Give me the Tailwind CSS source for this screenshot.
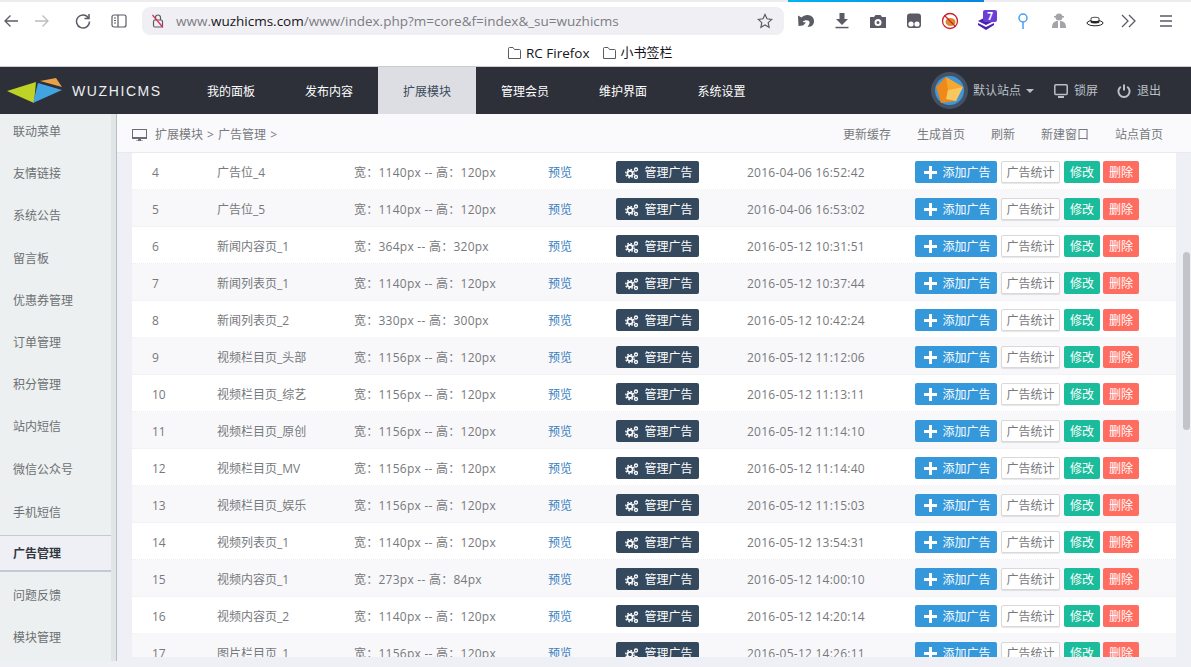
<!DOCTYPE html>
<html lang="zh-CN">

<head>
    <meta charset="UTF-8" />
    <title>WUZHICMS</title>
    <script src="https://cdn.jsdelivr.net/npm/@tailwindcss/browser@4"></script>
</head>

<body class="h-[667px] w-[1191px] overflow-hidden bg-[#eff0f6] text-[12px] text-[#77797d] font-['Open_Sans','Noto_Sans_CJK_SC',sans-serif]">

    <!-- browser toolbar -->
    <div class="h-[67px] bg-white border-b border-[#c9cbce]">
        <div class="h-[2px] bg-[#ededf0] pl-[788px]">
            <div class="h-[2px] w-[196px] bg-gradient-to-r from-[#00b3f4] to-[#0a84e0]"></div>
        </div>
        <div class="flex h-[38px] items-center text-[#5b5b66]">
            <svg class="ml-[3px] h-4 w-4" viewBox="0 0 16 16" fill="none" stroke="#5b5b66" stroke-width="1.3"><path d="M15 8H2M7.5 2.5 2 8l5.500 5.500" /></svg>
            <svg class="ml-[15px] h-4 w-4" viewBox="0 0 16 16" fill="none" stroke="#bcbcc2" stroke-width="1.3"><path d="M1 8h13M8.500 2.500 14 8l-5.500 5.500" /></svg>
            <svg class="ml-[25px] h-4 w-4" viewBox="0 0 16 16" fill="none" stroke="#5b5b66" stroke-width="1.500"><path d="M13.500 5A6.500 6.500 0 1 0 14.500 8.500" /><path d="M14 1v4.500H9.500" /></svg>
            <svg class="ml-[20px] h-4 w-4" viewBox="0 0 16 16" fill="none" stroke="#5b5b66" stroke-width="1.200"><rect x="1" y="2" width="14" height="12" rx="2" /><path d="M7 2v12M3 5h2M3 7.500h2M3 10h2" /></svg>
            <div class="ml-[15px] flex h-[28px] w-[642px] items-center rounded-[8px] bg-[#f0f0f4] pl-[8px] text-[13.500px]">
                <svg class="h-4 w-4 shrink-0" viewBox="0 0 16 16" fill="none" stroke="#5b5b66" stroke-width="1.200"><rect x="3.500" y="7" width="9" height="7" rx="1.500" /><path d="M5.500 7V4.500a2.500 2.500 0 0 1 5 0V7" /><path d="M2.500 2 13 14.500" stroke="#e22850" /></svg>
                <span class="ml-[10px] whitespace-nowrap text-[#7c7c84]">www.<span class="text-[#15141a]">wuzhicms.com</span>/www/index.php?m=core&amp;f=index&amp;_su=wuzhicms</span>
                <svg class="ml-auto mr-[11px] h-4 w-4 shrink-0" viewBox="0 0 16 16" fill="none" stroke="#5b5b66" stroke-width="1.200"><path d="m8 1.500 2 4.300 4.700.6-3.500 3.200.9 4.700L8 12l-4.100 2.300.9-4.700L1.300 6.400 6 5.800z" /></svg>
            </div>
            <div class="ml-[13px] flex items-center">
                <svg class="h-[18px] w-[18px]" viewBox="0 0 18 18" fill="#5b5b66"><path d="M1 3.500 1.500 14l4.500-.5 3-3-3.500-.5C7 8 10.500 7.500 12 9c1.200 1.300.5 3.500-1.500 5.500 3 1 6-1 6.500-4.500C17.500 6 14.500 3 10.500 3 8 3 6 4.200 4.500 5.500z" /></svg>
                <svg class="ml-[18px] h-[18px] w-[18px]" viewBox="0 0 18 18" fill="#5b5b66"><path d="M6.500 1h5v6h3.500L9 13 3 7h3.500z" /><rect x="2.500" y="14.800" width="13" height="1.500" /></svg>
                <svg class="ml-[18px] h-[18px] w-[18px]" viewBox="0 0 18 18" fill="#5b5b66"><path fill-rule="evenodd" d="M1 5h4l1.500-2h5L13 5h4v11H1zm8 2a3.500 3.500 0 1 0 0 7 3.500 3.500 0 0 0 0-7zm0 2a1.500 1.500 0 1 1 0 3 1.500 1.500 0 0 1 0-3z" /></svg>
                <svg class="ml-[18px] h-[18px] w-[18px]" viewBox="0 0 18 18"><rect x="2" y="1.500" width="14" height="14.500" rx="3" fill="#5b5b66" /><circle cx="6" cy="12" r="2.600" fill="#fff" /><circle cx="12" cy="12" r="2.600" fill="#fff" /></svg>
                <svg class="ml-[18px] h-[18px] w-[18px]" viewBox="0 0 18 18"><circle cx="9" cy="9" r="7.500" fill="#fff" stroke="#d0202c" stroke-width="1.300" /><ellipse cx="9.500" cy="10" rx="5" ry="4" fill="#d98a2b" /><path d="M3.500 3.500 14.500 14.500" stroke="#d0202c" stroke-width="1.300" /></svg>
                <div class="relative ml-[18px] h-[22px] w-[20px]">
                    <svg class="absolute left-0 top-[4px] h-[18px] w-[18px]" viewBox="0 0 18 18" fill="#4a1fb0"><path d="M9 3 17 7l-8 4-8-4z" /><path d="M1 9l8 4 8-4v2l-8 5-8-5z" /></svg>
                    <span class="absolute left-[6px] top-0 h-[12px] w-[14px] rounded-[2px] bg-[#6a3fd8] text-center text-[10px] font-bold leading-[12px] text-white">7</span>
                </div>
                <svg class="ml-[17px] h-[18px] w-[18px]" viewBox="0 0 18 18" fill="none" stroke="#4a9df0" stroke-width="1.500"><circle cx="9" cy="6" r="4" /><path d="M9 10v7" /></svg>
                <svg class="ml-[18px] h-[18px] w-[18px]" viewBox="0 0 18 18" fill="#a4a4a8"><circle cx="9" cy="5" r="3.500" /><path d="M2 16c0-5 2-7 6-7v7zM16 16c0-5-2-7-6-7v7z" /><rect x="4" y="4" width="10" height="1.500" /></svg>
                <svg class="ml-[18px] h-[18px] w-[18px]" viewBox="0 0 18 18"><ellipse cx="9" cy="11" rx="8" ry="2.800" fill="#fff" stroke="#222" stroke-width="1" /><path d="M5 10.500V6c2-1 6-1 8 0v4.500c-3 .8-5 .8-8 0z" fill="#fff" stroke="#222" stroke-width="0.800" /><path d="M5 8.500c3 .8 5 .8 8 0v2c-3 .8-5 .8-8 0z" fill="#222" /></svg>
                <svg class="ml-[16px] h-[18px] w-[18px]" viewBox="0 0 18 18" fill="none" stroke="#5b5b66" stroke-width="1.300"><path d="m2 3 6 6-6 6M9 3l6 6-6 6" /></svg>
                <svg class="ml-[20px] h-[16px] w-[16px]" viewBox="0 0 16 16" fill="none" stroke="#5b5b66" stroke-width="1.300"><path d="M2 3h12M2 8h12M2 13h12" /></svg>
            </div>
        </div>
        <div class="flex h-[26px] items-center pl-[507px] text-[13px] text-[#15141a]">
            <svg class="h-[14px] w-[15px]" viewBox="0 0 15 14" fill="none" stroke="#5b5b66" stroke-width="1"><path d="M1.500 12.500v-10a1 1 0 0 1 1-1H6l1.500 2h5a1 1 0 0 1 1 1v8z" /></svg>
            <span class="ml-[4px] text-[13.500px]">RC Firefox</span>
            <svg class="ml-[12px] h-[14px] w-[15px]" viewBox="0 0 15 14" fill="none" stroke="#5b5b66" stroke-width="1"><path d="M1.500 12.500v-10a1 1 0 0 1 1-1H6l1.500 2h5a1 1 0 0 1 1 1v8z" /></svg>
            <span class="ml-[4px]">小书签栏</span>
        </div>
    </div>

    <!-- top nav -->
    <header class="flex h-[47px] items-stretch bg-[#2d3038] pt-0 text-white">
        <div class="flex w-[182px] items-center pl-[7px]">
            <svg class="h-[26px] w-[58px]" viewBox="0 0 58 26">
                <polygon points="0,13 29,4 27,25" fill="#bfd324" />
                <polygon points="31,5 55,12 26,25" fill="#41a3e0" />
                <polygon points="33,3 49,0 55,9" fill="#e9a048" />
            </svg>
            <span class="ml-[7px] pt-[2px] font-['Liberation_Sans',sans-serif] text-[14px] tracking-[1.600px] text-[#eceef0]">WUZHICMS</span>
        </div>
        <a class="flex w-[98px] items-center justify-center pt-[2px]">我的面板</a>
        <a class="flex w-[98px] items-center justify-center pt-[2px]">发布内容</a>
        <a class="flex w-[98px] items-center justify-center bg-[#dcdee3] pt-[2px] text-[#3a4a5a]">扩展模块</a>
        <a class="flex w-[98px] items-center justify-center pt-[2px]">管理会员</a>
        <a class="flex w-[98px] items-center justify-center pt-[2px]">维护界面</a>
        <a class="flex w-[99px] items-center justify-center pt-[2px]">系统设置</a>
        <div class="ml-auto flex items-center pr-[30px] text-[#b9c0c8]">
            <svg class="h-[37px] w-[37px]" viewBox="0 0 37 37">
                <circle cx="18.500" cy="18.500" r="18.500" fill="#445266" />
                <circle cx="18.500" cy="18.500" r="14.500" fill="#3f97dc" />
                <polygon points="15,5 32,15 25,29 10,31 5,15" fill="#ee8a1c" />
                <polygon points="15,5 32,15 17,18" fill="#f6a72e" />
                <polygon points="17,18 32,15 25,29 15,27" fill="#f8c860" />
            </svg>
            <span class="ml-[5px] pt-[1px]">默认站点</span>
            <span class="ml-[5px] h-0 w-0 border-x-[4px] border-t-[4px] border-x-transparent border-t-[#b9c0c8]"></span>
            <svg class="ml-[20px] h-[14px] w-[14px]" viewBox="0 0 14 14" fill="none" stroke="#b9c0c8" stroke-width="1.500"><rect x="0.800" y="0.800" width="12.400" height="9.600" rx="1" /><path d="M4 13h6" stroke-width="2" /></svg>
            <span class="ml-[6px] pt-[1px]">锁屏</span>
            <svg class="ml-[19px] h-[14px] w-[14px]" viewBox="0 0 14 14" fill="none" stroke="#b9c0c8" stroke-width="2"><path d="M7 0.500v6" /><path d="M3.800 2.800a5.600 5.600 0 1 0 6.400 0" /></svg>
            <span class="ml-[6px] pt-[1px]">退出</span>
        </div>
    </header>

    <div class="flex h-[547px]">
        <!-- sidebar -->
        <aside class="flex w-[117px] shrink-0 border-r border-[#b8bdc7] bg-[#e0e5e5]">
            <nav class="flex w-[111px] flex-col overflow-hidden bg-[#ecf0f1] pt-[1px] text-[#6d7073]">
                <a class="flex h-[34px] shrink-0 items-center pl-[13px]">联动菜单</a>
                <a class="mt-[8px] flex h-[34px] shrink-0 items-center pl-[13px]">友情链接</a>
                <a class="mt-[8px] flex h-[34px] shrink-0 items-center pl-[13px]">系统公告</a>
                <a class="mt-[9px] flex h-[34px] shrink-0 items-center pl-[13px]">留言板</a>
                <a class="mt-[8px] flex h-[34px] shrink-0 items-center pl-[13px]">优惠券管理</a>
                <a class="mt-[8px] flex h-[34px] shrink-0 items-center pl-[13px]">订单管理</a>
                <a class="mt-[8px] flex h-[34px] shrink-0 items-center pl-[13px]">积分管理</a>
                <a class="mt-[8px] flex h-[34px] shrink-0 items-center pl-[13px]">站内短信</a>
                <a class="mt-[9px] flex h-[34px] shrink-0 items-center pl-[13px]">微信公众号</a>
                <a class="mt-[9px] flex h-[34px] shrink-0 items-center pl-[13px]">手机短信</a>
                <a class="mt-[5px] flex h-[37px] shrink-0 items-center border-y border-b-[2px] border-[#c4c9d3] bg-[#eff0f6] pl-[13px] pt-[1px] font-bold text-[#34383d]">广告管理</a>
                <a class="mt-[7px] flex h-[34px] shrink-0 items-center pl-[13px]">问题反馈</a>
                <a class="mt-[8px] flex h-[34px] shrink-0 items-center pl-[13px]">模块管理</a>
            </nav>
        </aside>

        <main class="relative flex min-w-0 flex-1 flex-col">
            <!-- breadcrumb -->
            <div class="flex h-[39px] shrink-0 items-center border-b border-[#e9eaf0] bg-[#fafafc] pl-[15px] pr-[28px] pt-[3px]">
                <svg class="h-[14px] w-[15px]" viewBox="0 0 15 14" fill="#6b6d70"><path fill-rule="evenodd" d="M0 1h15v10H9v1.500h2V13H4v-.5h2V11H0zm1 1v7h13V2z" /></svg>
                <span class="ml-[8px] [word-spacing:1px]">扩展模块 &gt; 广告管理 &gt;</span>
                <div class="ml-auto flex gap-[26px]">
                    <a>更新缓存</a><a>生成首页</a><a>刷新</a><a>新建窗口</a><a>站点首页</a>
                </div>
            </div>

            <!-- table -->
            <div class="ml-[15px] mr-[15px] flex h-[504px] flex-col overflow-hidden bg-white">
                <div class="grid h-[37px] shrink-0 grid-cols-[85px_137px_194px_68px_131px_168px_1fr] items-center border-b border-dotted border-[#eeeef2] bg-white pt-[2px] [&>span]:pt-[2px]">
                    <span class="pl-[20px]">4</span><span>广告位_4</span><span class="tracking-[0.250px]">宽：1140px -- 高：120px</span><a class="pt-[2px] text-[#3a7fc0]">预览</a>
                    <a class="flex h-[22px] w-[83px] items-center justify-center gap-[5px] rounded-[2px] bg-[#34495e] pl-[3px] pt-[1px] text-white"><svg class="h-[14px] w-[14px]" viewBox="0 0 14 14" fill="none" stroke="#fff"><circle cx="5" cy="7.500" r="2.600" stroke-width="1.600" /><circle cx="5" cy="7.500" r="4.200" stroke-width="1.400" stroke-dasharray="1.600 1.700" /><circle cx="11" cy="3.500" r="1.500" stroke-width="1.300" /><circle cx="11" cy="11" r="1.500" stroke-width="1.300" /></svg>管理广告</a>
                    <span class="tracking-[0.250px]">2016-04-06 16:52:42</span>
                    <div class="flex gap-[4px]">
                        <a class="flex h-[22px] w-[82px] items-center justify-center gap-[5px] rounded-[2px] bg-[#3498db] pl-[3px] pt-[1px] text-white"><svg class="h-[13px] w-[13px]" viewBox="0 0 13 13" fill="#fff"><path d="M5 0h3v5h5v3H8v5H5V8H0V5h5z" /></svg>添加广告</a>
                        <a class="flex h-[22px] w-[59px] items-center justify-center rounded-[2px] border border-[#d9d9d9] bg-white pt-[1px] text-[#77797d] shadow-[0_1px_1px_rgba(0,0,0,0.1)]">广告统计</a>
                        <a class="flex h-[22px] w-[36px] items-center justify-center rounded-[2px] bg-[#1abc9c] pt-[1px] text-white">修改</a>
                        <a class="-ml-[1px] flex h-[22px] w-[36px] items-center justify-center rounded-[2px] bg-[#ff6c60] pt-[1px] text-white">删除</a>
                    </div>
                </div>
                <div class="grid h-[37px] shrink-0 grid-cols-[85px_137px_194px_68px_131px_168px_1fr] items-center border-b border-dotted border-[#eeeef2] bg-[#f8f8fa] pt-[2px] [&>span]:pt-[2px]">
                    <span class="pl-[20px]">5</span><span>广告位_5</span><span class="tracking-[0.250px]">宽：1140px -- 高：120px</span><a class="pt-[2px] text-[#3a7fc0]">预览</a>
                    <a class="flex h-[22px] w-[83px] items-center justify-center gap-[5px] rounded-[2px] bg-[#34495e] pl-[3px] pt-[1px] text-white"><svg class="h-[14px] w-[14px]" viewBox="0 0 14 14" fill="none" stroke="#fff"><circle cx="5" cy="7.500" r="2.600" stroke-width="1.600" /><circle cx="5" cy="7.500" r="4.200" stroke-width="1.400" stroke-dasharray="1.600 1.700" /><circle cx="11" cy="3.500" r="1.500" stroke-width="1.300" /><circle cx="11" cy="11" r="1.500" stroke-width="1.300" /></svg>管理广告</a>
                    <span class="tracking-[0.250px]">2016-04-06 16:53:02</span>
                    <div class="flex gap-[4px]">
                        <a class="flex h-[22px] w-[82px] items-center justify-center gap-[5px] rounded-[2px] bg-[#3498db] pl-[3px] pt-[1px] text-white"><svg class="h-[13px] w-[13px]" viewBox="0 0 13 13" fill="#fff"><path d="M5 0h3v5h5v3H8v5H5V8H0V5h5z" /></svg>添加广告</a>
                        <a class="flex h-[22px] w-[59px] items-center justify-center rounded-[2px] border border-[#d9d9d9] bg-white pt-[1px] text-[#77797d] shadow-[0_1px_1px_rgba(0,0,0,0.1)]">广告统计</a>
                        <a class="flex h-[22px] w-[36px] items-center justify-center rounded-[2px] bg-[#1abc9c] pt-[1px] text-white">修改</a>
                        <a class="-ml-[1px] flex h-[22px] w-[36px] items-center justify-center rounded-[2px] bg-[#ff6c60] pt-[1px] text-white">删除</a>
                    </div>
                </div>
                <div class="grid h-[37px] shrink-0 grid-cols-[85px_137px_194px_68px_131px_168px_1fr] items-center border-b border-dotted border-[#eeeef2] bg-white pt-[2px] [&>span]:pt-[2px]">
                    <span class="pl-[20px]">6</span><span>新闻内容页_1</span><span class="tracking-[0.250px]">宽：364px -- 高：320px</span><a class="pt-[2px] text-[#3a7fc0]">预览</a>
                    <a class="flex h-[22px] w-[83px] items-center justify-center gap-[5px] rounded-[2px] bg-[#34495e] pl-[3px] pt-[1px] text-white"><svg class="h-[14px] w-[14px]" viewBox="0 0 14 14" fill="none" stroke="#fff"><circle cx="5" cy="7.500" r="2.600" stroke-width="1.600" /><circle cx="5" cy="7.500" r="4.200" stroke-width="1.400" stroke-dasharray="1.600 1.700" /><circle cx="11" cy="3.500" r="1.500" stroke-width="1.300" /><circle cx="11" cy="11" r="1.500" stroke-width="1.300" /></svg>管理广告</a>
                    <span class="tracking-[0.250px]">2016-05-12 10:31:51</span>
                    <div class="flex gap-[4px]">
                        <a class="flex h-[22px] w-[82px] items-center justify-center gap-[5px] rounded-[2px] bg-[#3498db] pl-[3px] pt-[1px] text-white"><svg class="h-[13px] w-[13px]" viewBox="0 0 13 13" fill="#fff"><path d="M5 0h3v5h5v3H8v5H5V8H0V5h5z" /></svg>添加广告</a>
                        <a class="flex h-[22px] w-[59px] items-center justify-center rounded-[2px] border border-[#d9d9d9] bg-white pt-[1px] text-[#77797d] shadow-[0_1px_1px_rgba(0,0,0,0.1)]">广告统计</a>
                        <a class="flex h-[22px] w-[36px] items-center justify-center rounded-[2px] bg-[#1abc9c] pt-[1px] text-white">修改</a>
                        <a class="-ml-[1px] flex h-[22px] w-[36px] items-center justify-center rounded-[2px] bg-[#ff6c60] pt-[1px] text-white">删除</a>
                    </div>
                </div>
                <div class="grid h-[37px] shrink-0 grid-cols-[85px_137px_194px_68px_131px_168px_1fr] items-center border-b border-dotted border-[#eeeef2] bg-[#f8f8fa] pt-[2px] [&>span]:pt-[2px]">
                    <span class="pl-[20px]">7</span><span>新闻列表页_1</span><span class="tracking-[0.250px]">宽：1140px -- 高：120px</span><a class="pt-[2px] text-[#3a7fc0]">预览</a>
                    <a class="flex h-[22px] w-[83px] items-center justify-center gap-[5px] rounded-[2px] bg-[#34495e] pl-[3px] pt-[1px] text-white"><svg class="h-[14px] w-[14px]" viewBox="0 0 14 14" fill="none" stroke="#fff"><circle cx="5" cy="7.500" r="2.600" stroke-width="1.600" /><circle cx="5" cy="7.500" r="4.200" stroke-width="1.400" stroke-dasharray="1.600 1.700" /><circle cx="11" cy="3.500" r="1.500" stroke-width="1.300" /><circle cx="11" cy="11" r="1.500" stroke-width="1.300" /></svg>管理广告</a>
                    <span class="tracking-[0.250px]">2016-05-12 10:37:44</span>
                    <div class="flex gap-[4px]">
                        <a class="flex h-[22px] w-[82px] items-center justify-center gap-[5px] rounded-[2px] bg-[#3498db] pl-[3px] pt-[1px] text-white"><svg class="h-[13px] w-[13px]" viewBox="0 0 13 13" fill="#fff"><path d="M5 0h3v5h5v3H8v5H5V8H0V5h5z" /></svg>添加广告</a>
                        <a class="flex h-[22px] w-[59px] items-center justify-center rounded-[2px] border border-[#d9d9d9] bg-white pt-[1px] text-[#77797d] shadow-[0_1px_1px_rgba(0,0,0,0.1)]">广告统计</a>
                        <a class="flex h-[22px] w-[36px] items-center justify-center rounded-[2px] bg-[#1abc9c] pt-[1px] text-white">修改</a>
                        <a class="-ml-[1px] flex h-[22px] w-[36px] items-center justify-center rounded-[2px] bg-[#ff6c60] pt-[1px] text-white">删除</a>
                    </div>
                </div>
                <div class="grid h-[37px] shrink-0 grid-cols-[85px_137px_194px_68px_131px_168px_1fr] items-center border-b border-dotted border-[#eeeef2] bg-white pt-[2px] [&>span]:pt-[2px]">
                    <span class="pl-[20px]">8</span><span>新闻列表页_2</span><span class="tracking-[0.250px]">宽：330px -- 高：300px</span><a class="pt-[2px] text-[#3a7fc0]">预览</a>
                    <a class="flex h-[22px] w-[83px] items-center justify-center gap-[5px] rounded-[2px] bg-[#34495e] pl-[3px] pt-[1px] text-white"><svg class="h-[14px] w-[14px]" viewBox="0 0 14 14" fill="none" stroke="#fff"><circle cx="5" cy="7.500" r="2.600" stroke-width="1.600" /><circle cx="5" cy="7.500" r="4.200" stroke-width="1.400" stroke-dasharray="1.600 1.700" /><circle cx="11" cy="3.500" r="1.500" stroke-width="1.300" /><circle cx="11" cy="11" r="1.500" stroke-width="1.300" /></svg>管理广告</a>
                    <span class="tracking-[0.250px]">2016-05-12 10:42:24</span>
                    <div class="flex gap-[4px]">
                        <a class="flex h-[22px] w-[82px] items-center justify-center gap-[5px] rounded-[2px] bg-[#3498db] pl-[3px] pt-[1px] text-white"><svg class="h-[13px] w-[13px]" viewBox="0 0 13 13" fill="#fff"><path d="M5 0h3v5h5v3H8v5H5V8H0V5h5z" /></svg>添加广告</a>
                        <a class="flex h-[22px] w-[59px] items-center justify-center rounded-[2px] border border-[#d9d9d9] bg-white pt-[1px] text-[#77797d] shadow-[0_1px_1px_rgba(0,0,0,0.1)]">广告统计</a>
                        <a class="flex h-[22px] w-[36px] items-center justify-center rounded-[2px] bg-[#1abc9c] pt-[1px] text-white">修改</a>
                        <a class="-ml-[1px] flex h-[22px] w-[36px] items-center justify-center rounded-[2px] bg-[#ff6c60] pt-[1px] text-white">删除</a>
                    </div>
                </div>
                <div class="grid h-[37px] shrink-0 grid-cols-[85px_137px_194px_68px_131px_168px_1fr] items-center border-b border-dotted border-[#eeeef2] bg-[#f8f8fa] pt-[2px] [&>span]:pt-[2px]">
                    <span class="pl-[20px]">9</span><span>视频栏目页_头部</span><span class="tracking-[0.250px]">宽：1156px -- 高：120px</span><a class="pt-[2px] text-[#3a7fc0]">预览</a>
                    <a class="flex h-[22px] w-[83px] items-center justify-center gap-[5px] rounded-[2px] bg-[#34495e] pl-[3px] pt-[1px] text-white"><svg class="h-[14px] w-[14px]" viewBox="0 0 14 14" fill="none" stroke="#fff"><circle cx="5" cy="7.500" r="2.600" stroke-width="1.600" /><circle cx="5" cy="7.500" r="4.200" stroke-width="1.400" stroke-dasharray="1.600 1.700" /><circle cx="11" cy="3.500" r="1.500" stroke-width="1.300" /><circle cx="11" cy="11" r="1.500" stroke-width="1.300" /></svg>管理广告</a>
                    <span class="tracking-[0.250px]">2016-05-12 11:12:06</span>
                    <div class="flex gap-[4px]">
                        <a class="flex h-[22px] w-[82px] items-center justify-center gap-[5px] rounded-[2px] bg-[#3498db] pl-[3px] pt-[1px] text-white"><svg class="h-[13px] w-[13px]" viewBox="0 0 13 13" fill="#fff"><path d="M5 0h3v5h5v3H8v5H5V8H0V5h5z" /></svg>添加广告</a>
                        <a class="flex h-[22px] w-[59px] items-center justify-center rounded-[2px] border border-[#d9d9d9] bg-white pt-[1px] text-[#77797d] shadow-[0_1px_1px_rgba(0,0,0,0.1)]">广告统计</a>
                        <a class="flex h-[22px] w-[36px] items-center justify-center rounded-[2px] bg-[#1abc9c] pt-[1px] text-white">修改</a>
                        <a class="-ml-[1px] flex h-[22px] w-[36px] items-center justify-center rounded-[2px] bg-[#ff6c60] pt-[1px] text-white">删除</a>
                    </div>
                </div>
                <div class="grid h-[37px] shrink-0 grid-cols-[85px_137px_194px_68px_131px_168px_1fr] items-center border-b border-dotted border-[#eeeef2] bg-white pt-[2px] [&>span]:pt-[2px]">
                    <span class="pl-[20px]">10</span><span>视频栏目页_综艺</span><span class="tracking-[0.250px]">宽：1156px -- 高：120px</span><a class="pt-[2px] text-[#3a7fc0]">预览</a>
                    <a class="flex h-[22px] w-[83px] items-center justify-center gap-[5px] rounded-[2px] bg-[#34495e] pl-[3px] pt-[1px] text-white"><svg class="h-[14px] w-[14px]" viewBox="0 0 14 14" fill="none" stroke="#fff"><circle cx="5" cy="7.500" r="2.600" stroke-width="1.600" /><circle cx="5" cy="7.500" r="4.200" stroke-width="1.400" stroke-dasharray="1.600 1.700" /><circle cx="11" cy="3.500" r="1.500" stroke-width="1.300" /><circle cx="11" cy="11" r="1.500" stroke-width="1.300" /></svg>管理广告</a>
                    <span class="tracking-[0.250px]">2016-05-12 11:13:11</span>
                    <div class="flex gap-[4px]">
                        <a class="flex h-[22px] w-[82px] items-center justify-center gap-[5px] rounded-[2px] bg-[#3498db] pl-[3px] pt-[1px] text-white"><svg class="h-[13px] w-[13px]" viewBox="0 0 13 13" fill="#fff"><path d="M5 0h3v5h5v3H8v5H5V8H0V5h5z" /></svg>添加广告</a>
                        <a class="flex h-[22px] w-[59px] items-center justify-center rounded-[2px] border border-[#d9d9d9] bg-white pt-[1px] text-[#77797d] shadow-[0_1px_1px_rgba(0,0,0,0.1)]">广告统计</a>
                        <a class="flex h-[22px] w-[36px] items-center justify-center rounded-[2px] bg-[#1abc9c] pt-[1px] text-white">修改</a>
                        <a class="-ml-[1px] flex h-[22px] w-[36px] items-center justify-center rounded-[2px] bg-[#ff6c60] pt-[1px] text-white">删除</a>
                    </div>
                </div>
                <div class="grid h-[37px] shrink-0 grid-cols-[85px_137px_194px_68px_131px_168px_1fr] items-center border-b border-dotted border-[#eeeef2] bg-[#f8f8fa] pt-[2px] [&>span]:pt-[2px]">
                    <span class="pl-[20px]">11</span><span>视频栏目页_原创</span><span class="tracking-[0.250px]">宽：1156px -- 高：120px</span><a class="pt-[2px] text-[#3a7fc0]">预览</a>
                    <a class="flex h-[22px] w-[83px] items-center justify-center gap-[5px] rounded-[2px] bg-[#34495e] pl-[3px] pt-[1px] text-white"><svg class="h-[14px] w-[14px]" viewBox="0 0 14 14" fill="none" stroke="#fff"><circle cx="5" cy="7.500" r="2.600" stroke-width="1.600" /><circle cx="5" cy="7.500" r="4.200" stroke-width="1.400" stroke-dasharray="1.600 1.700" /><circle cx="11" cy="3.500" r="1.500" stroke-width="1.300" /><circle cx="11" cy="11" r="1.500" stroke-width="1.300" /></svg>管理广告</a>
                    <span class="tracking-[0.250px]">2016-05-12 11:14:10</span>
                    <div class="flex gap-[4px]">
                        <a class="flex h-[22px] w-[82px] items-center justify-center gap-[5px] rounded-[2px] bg-[#3498db] pl-[3px] pt-[1px] text-white"><svg class="h-[13px] w-[13px]" viewBox="0 0 13 13" fill="#fff"><path d="M5 0h3v5h5v3H8v5H5V8H0V5h5z" /></svg>添加广告</a>
                        <a class="flex h-[22px] w-[59px] items-center justify-center rounded-[2px] border border-[#d9d9d9] bg-white pt-[1px] text-[#77797d] shadow-[0_1px_1px_rgba(0,0,0,0.1)]">广告统计</a>
                        <a class="flex h-[22px] w-[36px] items-center justify-center rounded-[2px] bg-[#1abc9c] pt-[1px] text-white">修改</a>
                        <a class="-ml-[1px] flex h-[22px] w-[36px] items-center justify-center rounded-[2px] bg-[#ff6c60] pt-[1px] text-white">删除</a>
                    </div>
                </div>
                <div class="grid h-[37px] shrink-0 grid-cols-[85px_137px_194px_68px_131px_168px_1fr] items-center border-b border-dotted border-[#eeeef2] bg-white pt-[2px] [&>span]:pt-[2px]">
                    <span class="pl-[20px]">12</span><span>视频栏目页_MV</span><span class="tracking-[0.250px]">宽：1156px -- 高：120px</span><a class="pt-[2px] text-[#3a7fc0]">预览</a>
                    <a class="flex h-[22px] w-[83px] items-center justify-center gap-[5px] rounded-[2px] bg-[#34495e] pl-[3px] pt-[1px] text-white"><svg class="h-[14px] w-[14px]" viewBox="0 0 14 14" fill="none" stroke="#fff"><circle cx="5" cy="7.500" r="2.600" stroke-width="1.600" /><circle cx="5" cy="7.500" r="4.200" stroke-width="1.400" stroke-dasharray="1.600 1.700" /><circle cx="11" cy="3.500" r="1.500" stroke-width="1.300" /><circle cx="11" cy="11" r="1.500" stroke-width="1.300" /></svg>管理广告</a>
                    <span class="tracking-[0.250px]">2016-05-12 11:14:40</span>
                    <div class="flex gap-[4px]">
                        <a class="flex h-[22px] w-[82px] items-center justify-center gap-[5px] rounded-[2px] bg-[#3498db] pl-[3px] pt-[1px] text-white"><svg class="h-[13px] w-[13px]" viewBox="0 0 13 13" fill="#fff"><path d="M5 0h3v5h5v3H8v5H5V8H0V5h5z" /></svg>添加广告</a>
                        <a class="flex h-[22px] w-[59px] items-center justify-center rounded-[2px] border border-[#d9d9d9] bg-white pt-[1px] text-[#77797d] shadow-[0_1px_1px_rgba(0,0,0,0.1)]">广告统计</a>
                        <a class="flex h-[22px] w-[36px] items-center justify-center rounded-[2px] bg-[#1abc9c] pt-[1px] text-white">修改</a>
                        <a class="-ml-[1px] flex h-[22px] w-[36px] items-center justify-center rounded-[2px] bg-[#ff6c60] pt-[1px] text-white">删除</a>
                    </div>
                </div>
                <div class="grid h-[37px] shrink-0 grid-cols-[85px_137px_194px_68px_131px_168px_1fr] items-center border-b border-dotted border-[#eeeef2] bg-[#f8f8fa] pt-[2px] [&>span]:pt-[2px]">
                    <span class="pl-[20px]">13</span><span>视频栏目页_娱乐</span><span class="tracking-[0.250px]">宽：1156px -- 高：120px</span><a class="pt-[2px] text-[#3a7fc0]">预览</a>
                    <a class="flex h-[22px] w-[83px] items-center justify-center gap-[5px] rounded-[2px] bg-[#34495e] pl-[3px] pt-[1px] text-white"><svg class="h-[14px] w-[14px]" viewBox="0 0 14 14" fill="none" stroke="#fff"><circle cx="5" cy="7.500" r="2.600" stroke-width="1.600" /><circle cx="5" cy="7.500" r="4.200" stroke-width="1.400" stroke-dasharray="1.600 1.700" /><circle cx="11" cy="3.500" r="1.500" stroke-width="1.300" /><circle cx="11" cy="11" r="1.500" stroke-width="1.300" /></svg>管理广告</a>
                    <span class="tracking-[0.250px]">2016-05-12 11:15:03</span>
                    <div class="flex gap-[4px]">
                        <a class="flex h-[22px] w-[82px] items-center justify-center gap-[5px] rounded-[2px] bg-[#3498db] pl-[3px] pt-[1px] text-white"><svg class="h-[13px] w-[13px]" viewBox="0 0 13 13" fill="#fff"><path d="M5 0h3v5h5v3H8v5H5V8H0V5h5z" /></svg>添加广告</a>
                        <a class="flex h-[22px] w-[59px] items-center justify-center rounded-[2px] border border-[#d9d9d9] bg-white pt-[1px] text-[#77797d] shadow-[0_1px_1px_rgba(0,0,0,0.1)]">广告统计</a>
                        <a class="flex h-[22px] w-[36px] items-center justify-center rounded-[2px] bg-[#1abc9c] pt-[1px] text-white">修改</a>
                        <a class="-ml-[1px] flex h-[22px] w-[36px] items-center justify-center rounded-[2px] bg-[#ff6c60] pt-[1px] text-white">删除</a>
                    </div>
                </div>
                <div class="grid h-[37px] shrink-0 grid-cols-[85px_137px_194px_68px_131px_168px_1fr] items-center border-b border-dotted border-[#eeeef2] bg-white pt-[2px] [&>span]:pt-[2px]">
                    <span class="pl-[20px]">14</span><span>视频列表页_1</span><span class="tracking-[0.250px]">宽：1140px -- 高：120px</span><a class="pt-[2px] text-[#3a7fc0]">预览</a>
                    <a class="flex h-[22px] w-[83px] items-center justify-center gap-[5px] rounded-[2px] bg-[#34495e] pl-[3px] pt-[1px] text-white"><svg class="h-[14px] w-[14px]" viewBox="0 0 14 14" fill="none" stroke="#fff"><circle cx="5" cy="7.500" r="2.600" stroke-width="1.600" /><circle cx="5" cy="7.500" r="4.200" stroke-width="1.400" stroke-dasharray="1.600 1.700" /><circle cx="11" cy="3.500" r="1.500" stroke-width="1.300" /><circle cx="11" cy="11" r="1.500" stroke-width="1.300" /></svg>管理广告</a>
                    <span class="tracking-[0.250px]">2016-05-12 13:54:31</span>
                    <div class="flex gap-[4px]">
                        <a class="flex h-[22px] w-[82px] items-center justify-center gap-[5px] rounded-[2px] bg-[#3498db] pl-[3px] pt-[1px] text-white"><svg class="h-[13px] w-[13px]" viewBox="0 0 13 13" fill="#fff"><path d="M5 0h3v5h5v3H8v5H5V8H0V5h5z" /></svg>添加广告</a>
                        <a class="flex h-[22px] w-[59px] items-center justify-center rounded-[2px] border border-[#d9d9d9] bg-white pt-[1px] text-[#77797d] shadow-[0_1px_1px_rgba(0,0,0,0.1)]">广告统计</a>
                        <a class="flex h-[22px] w-[36px] items-center justify-center rounded-[2px] bg-[#1abc9c] pt-[1px] text-white">修改</a>
                        <a class="-ml-[1px] flex h-[22px] w-[36px] items-center justify-center rounded-[2px] bg-[#ff6c60] pt-[1px] text-white">删除</a>
                    </div>
                </div>
                <div class="grid h-[37px] shrink-0 grid-cols-[85px_137px_194px_68px_131px_168px_1fr] items-center border-b border-dotted border-[#eeeef2] bg-[#f8f8fa] pt-[2px] [&>span]:pt-[2px]">
                    <span class="pl-[20px]">15</span><span>视频内容页_1</span><span class="tracking-[0.250px]">宽：273px -- 高：84px</span><a class="pt-[2px] text-[#3a7fc0]">预览</a>
                    <a class="flex h-[22px] w-[83px] items-center justify-center gap-[5px] rounded-[2px] bg-[#34495e] pl-[3px] pt-[1px] text-white"><svg class="h-[14px] w-[14px]" viewBox="0 0 14 14" fill="none" stroke="#fff"><circle cx="5" cy="7.500" r="2.600" stroke-width="1.600" /><circle cx="5" cy="7.500" r="4.200" stroke-width="1.400" stroke-dasharray="1.600 1.700" /><circle cx="11" cy="3.500" r="1.500" stroke-width="1.300" /><circle cx="11" cy="11" r="1.500" stroke-width="1.300" /></svg>管理广告</a>
                    <span class="tracking-[0.250px]">2016-05-12 14:00:10</span>
                    <div class="flex gap-[4px]">
                        <a class="flex h-[22px] w-[82px] items-center justify-center gap-[5px] rounded-[2px] bg-[#3498db] pl-[3px] pt-[1px] text-white"><svg class="h-[13px] w-[13px]" viewBox="0 0 13 13" fill="#fff"><path d="M5 0h3v5h5v3H8v5H5V8H0V5h5z" /></svg>添加广告</a>
                        <a class="flex h-[22px] w-[59px] items-center justify-center rounded-[2px] border border-[#d9d9d9] bg-white pt-[1px] text-[#77797d] shadow-[0_1px_1px_rgba(0,0,0,0.1)]">广告统计</a>
                        <a class="flex h-[22px] w-[36px] items-center justify-center rounded-[2px] bg-[#1abc9c] pt-[1px] text-white">修改</a>
                        <a class="-ml-[1px] flex h-[22px] w-[36px] items-center justify-center rounded-[2px] bg-[#ff6c60] pt-[1px] text-white">删除</a>
                    </div>
                </div>
                <div class="grid h-[37px] shrink-0 grid-cols-[85px_137px_194px_68px_131px_168px_1fr] items-center border-b border-dotted border-[#eeeef2] bg-white pt-[2px] [&>span]:pt-[2px]">
                    <span class="pl-[20px]">16</span><span>视频内容页_2</span><span class="tracking-[0.250px]">宽：1140px -- 高：120px</span><a class="pt-[2px] text-[#3a7fc0]">预览</a>
                    <a class="flex h-[22px] w-[83px] items-center justify-center gap-[5px] rounded-[2px] bg-[#34495e] pl-[3px] pt-[1px] text-white"><svg class="h-[14px] w-[14px]" viewBox="0 0 14 14" fill="none" stroke="#fff"><circle cx="5" cy="7.500" r="2.600" stroke-width="1.600" /><circle cx="5" cy="7.500" r="4.200" stroke-width="1.400" stroke-dasharray="1.600 1.700" /><circle cx="11" cy="3.500" r="1.500" stroke-width="1.300" /><circle cx="11" cy="11" r="1.500" stroke-width="1.300" /></svg>管理广告</a>
                    <span class="tracking-[0.250px]">2016-05-12 14:20:14</span>
                    <div class="flex gap-[4px]">
                        <a class="flex h-[22px] w-[82px] items-center justify-center gap-[5px] rounded-[2px] bg-[#3498db] pl-[3px] pt-[1px] text-white"><svg class="h-[13px] w-[13px]" viewBox="0 0 13 13" fill="#fff"><path d="M5 0h3v5h5v3H8v5H5V8H0V5h5z" /></svg>添加广告</a>
                        <a class="flex h-[22px] w-[59px] items-center justify-center rounded-[2px] border border-[#d9d9d9] bg-white pt-[1px] text-[#77797d] shadow-[0_1px_1px_rgba(0,0,0,0.1)]">广告统计</a>
                        <a class="flex h-[22px] w-[36px] items-center justify-center rounded-[2px] bg-[#1abc9c] pt-[1px] text-white">修改</a>
                        <a class="-ml-[1px] flex h-[22px] w-[36px] items-center justify-center rounded-[2px] bg-[#ff6c60] pt-[1px] text-white">删除</a>
                    </div>
                </div>
                <div class="grid h-[37px] shrink-0 grid-cols-[85px_137px_194px_68px_131px_168px_1fr] items-center border-b border-dotted border-[#eeeef2] bg-[#f8f8fa] pt-[2px] [&>span]:pt-[2px]">
                    <span class="pl-[20px]">17</span><span>图片栏目页_1</span><span class="tracking-[0.250px]">宽：1156px -- 高：120px</span><a class="pt-[2px] text-[#3a7fc0]">预览</a>
                    <a class="flex h-[22px] w-[83px] items-center justify-center gap-[5px] rounded-[2px] bg-[#34495e] pl-[3px] pt-[1px] text-white"><svg class="h-[14px] w-[14px]" viewBox="0 0 14 14" fill="none" stroke="#fff"><circle cx="5" cy="7.500" r="2.600" stroke-width="1.600" /><circle cx="5" cy="7.500" r="4.200" stroke-width="1.400" stroke-dasharray="1.600 1.700" /><circle cx="11" cy="3.500" r="1.500" stroke-width="1.300" /><circle cx="11" cy="11" r="1.500" stroke-width="1.300" /></svg>管理广告</a>
                    <span class="tracking-[0.250px]">2016-05-12 14:26:11</span>
                    <div class="flex gap-[4px]">
                        <a class="flex h-[22px] w-[82px] items-center justify-center gap-[5px] rounded-[2px] bg-[#3498db] pl-[3px] pt-[1px] text-white"><svg class="h-[13px] w-[13px]" viewBox="0 0 13 13" fill="#fff"><path d="M5 0h3v5h5v3H8v5H5V8H0V5h5z" /></svg>添加广告</a>
                        <a class="flex h-[22px] w-[59px] items-center justify-center rounded-[2px] border border-[#d9d9d9] bg-white pt-[1px] text-[#77797d] shadow-[0_1px_1px_rgba(0,0,0,0.1)]">广告统计</a>
                        <a class="flex h-[22px] w-[36px] items-center justify-center rounded-[2px] bg-[#1abc9c] pt-[1px] text-white">修改</a>
                        <a class="-ml-[1px] flex h-[22px] w-[36px] items-center justify-center rounded-[2px] bg-[#ff6c60] pt-[1px] text-white">删除</a>
                    </div>
                </div>
            </div>

            <!-- scrollbar -->
            <div class="absolute right-[1px] top-[138px] h-[178px] w-[7px] rounded-full bg-[#c2c4c9]"></div>
        </main>
    </div>
</body>

</html>
